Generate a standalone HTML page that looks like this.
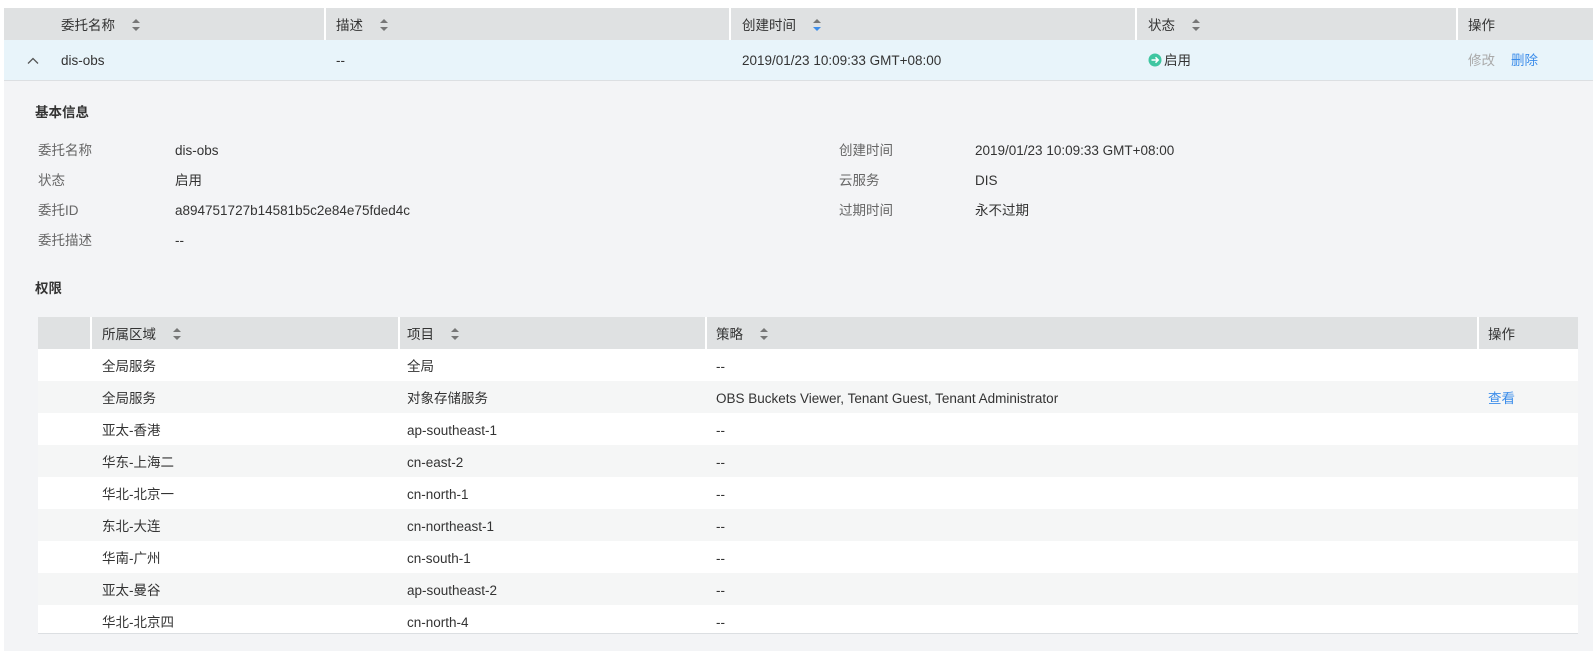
<!DOCTYPE html><html><head><meta charset="utf-8"><style>
*{margin:0;padding:0;box-sizing:border-box}
body{width:1593px;height:651px;background:#fff;font-family:"Liberation Sans","Noto Sans CJK SC",sans-serif;font-size:13.5px;color:#333;position:relative;overflow:hidden}
.a{position:absolute;white-space:nowrap;line-height:18px;padding-top:2px}
svg.a{padding:0}
.sort{display:inline-block;width:8px;height:12px;vertical-align:middle;margin-left:17px;position:relative;top:-1px}
.sort:before{content:"";position:absolute;left:0;top:0;border:4px solid transparent;border-bottom:4.5px solid #777;border-top:0}
.sort:after{content:"";position:absolute;left:0;bottom:0;border:4px solid transparent;border-top:4.5px solid #777;border-bottom:0}
.sort.blue:after{border-top-color:#3c8dea}
.sep{position:absolute;width:2px;background:#fff}
.lab{color:#666}
</style></head><body>
<div class="a" style="left:4px;top:8px;width:1589px;height:32px;background:#dfe1e2"></div>
<div class="sep" style="left:324px;top:8px;height:32px"></div>
<div class="sep" style="left:729px;top:8px;height:32px"></div>
<div class="sep" style="left:1135px;top:8px;height:32px"></div>
<div class="sep" style="left:1456px;top:8px;height:32px"></div>
<div class="a" style="left:61px;top:15px">委托名称<span class="sort"></span></div>
<div class="a" style="left:336px;top:15px">描述<span class="sort"></span></div>
<div class="a" style="left:742px;top:15px">创建时间<span class="sort blue"></span></div>
<div class="a" style="left:1148px;top:15px">状态<span class="sort"></span></div>
<div class="a" style="left:1468px;top:15px">操作</div>
<div class="a" style="left:4px;top:40px;width:1589px;height:41px;background:#e8f4fa;border-bottom:1px solid #dcdfe2"></div>
<svg class="a" style="left:27px;top:57px" width="12" height="8"><path d="M1 6.5L6 1.5L11 6.5" fill="none" stroke="#555" stroke-width="1.3"/></svg>
<div class="a" style="left:61px;top:50px">dis-obs</div>
<div class="a" style="left:336px;top:50px">--</div>
<div class="a" style="left:742px;top:50px">2019/01/23 10:09:33 GMT+08:00</div>
<svg class="a" style="left:1148px;top:53px" width="14" height="14"><circle cx="7" cy="7" r="6.5" fill="#3fc6a1"/><path d="M3.5 7H10M7.5 4.3L10.2 7L7.5 9.7" fill="none" stroke="#fff" stroke-width="1.5"/></svg>
<div class="a" style="left:1164px;top:50px">启用</div>
<div class="a" style="left:1468px;top:50px;color:#aaa">修改</div>
<div class="a" style="left:1511px;top:50px;color:#3c8dea">删除</div>
<div class="a" style="left:4px;top:81px;width:1589px;height:570px;background:#f3f4f6"></div>
<div class="a" style="left:35px;top:102px;font-weight:bold">基本信息</div>
<div class="a lab" style="left:38px;top:140px">委托名称</div><div class="a" style="left:175px;top:140px">dis-obs</div>
<div class="a lab" style="left:38px;top:170px">状态</div><div class="a" style="left:175px;top:170px">启用</div>
<div class="a lab" style="left:38px;top:200px">委托ID</div><div class="a" style="left:175px;top:200px">a894751727b14581b5c2e84e75fded4c</div>
<div class="a lab" style="left:38px;top:230px">委托描述</div><div class="a" style="left:175px;top:230px">--</div>
<div class="a lab" style="left:839px;top:140px">创建时间</div><div class="a" style="left:975px;top:140px">2019/01/23 10:09:33 GMT+08:00</div>
<div class="a lab" style="left:839px;top:170px">云服务</div><div class="a" style="left:975px;top:170px">DIS</div>
<div class="a lab" style="left:839px;top:200px">过期时间</div><div class="a" style="left:975px;top:200px">永不过期</div>
<div class="a" style="left:35px;top:278px;font-weight:bold">权限</div>
<div class="a" style="left:38px;top:317px;width:1540px;height:317px;background:#fff;border-bottom:1px solid #dcdfe2"></div>
<div class="a" style="left:38px;top:317px;width:1540px;height:32px;background:#dfe1e2"></div>
<div class="sep" style="left:90px;top:317px;height:32px"></div>
<div class="sep" style="left:398px;top:317px;height:32px"></div>
<div class="sep" style="left:705px;top:317px;height:32px"></div>
<div class="sep" style="left:1477px;top:317px;height:32px"></div>
<div class="a" style="left:102px;top:324px">所属区域<span class="sort"></span></div>
<div class="a" style="left:407px;top:324px">项目<span class="sort"></span></div>
<div class="a" style="left:716px;top:324px">策略<span class="sort"></span></div>
<div class="a" style="left:1488px;top:324px">操作</div>
<div class="a" style="left:38px;top:381px;width:1540px;height:32px;background:#f5f6f6"></div>
<div class="a" style="left:38px;top:445px;width:1540px;height:32px;background:#f5f6f6"></div>
<div class="a" style="left:38px;top:509px;width:1540px;height:32px;background:#f5f6f6"></div>
<div class="a" style="left:38px;top:573px;width:1540px;height:32px;background:#f5f6f6"></div>
<div class="a" style="left:102px;top:356px">全局服务</div><div class="a" style="left:407px;top:356px">全局</div><div class="a" style="left:716px;top:356px">--</div>
<div class="a" style="left:102px;top:388px">全局服务</div><div class="a" style="left:407px;top:388px">对象存储服务</div><div class="a" style="left:716px;top:388px">OBS Buckets Viewer, Tenant Guest, Tenant Administrator</div><div class="a" style="left:1488px;top:388px;color:#3c8dea">查看</div>
<div class="a" style="left:102px;top:420px">亚太-香港</div><div class="a" style="left:407px;top:420px">ap-southeast-1</div><div class="a" style="left:716px;top:420px">--</div>
<div class="a" style="left:102px;top:452px">华东-上海二</div><div class="a" style="left:407px;top:452px">cn-east-2</div><div class="a" style="left:716px;top:452px">--</div>
<div class="a" style="left:102px;top:484px">华北-北京一</div><div class="a" style="left:407px;top:484px">cn-north-1</div><div class="a" style="left:716px;top:484px">--</div>
<div class="a" style="left:102px;top:516px">东北-大连</div><div class="a" style="left:407px;top:516px">cn-northeast-1</div><div class="a" style="left:716px;top:516px">--</div>
<div class="a" style="left:102px;top:548px">华南-广州</div><div class="a" style="left:407px;top:548px">cn-south-1</div><div class="a" style="left:716px;top:548px">--</div>
<div class="a" style="left:102px;top:580px">亚太-曼谷</div><div class="a" style="left:407px;top:580px">ap-southeast-2</div><div class="a" style="left:716px;top:580px">--</div>
<div class="a" style="left:102px;top:612px">华北-北京四</div><div class="a" style="left:407px;top:612px">cn-north-4</div><div class="a" style="left:716px;top:612px">--</div>
</body></html>
